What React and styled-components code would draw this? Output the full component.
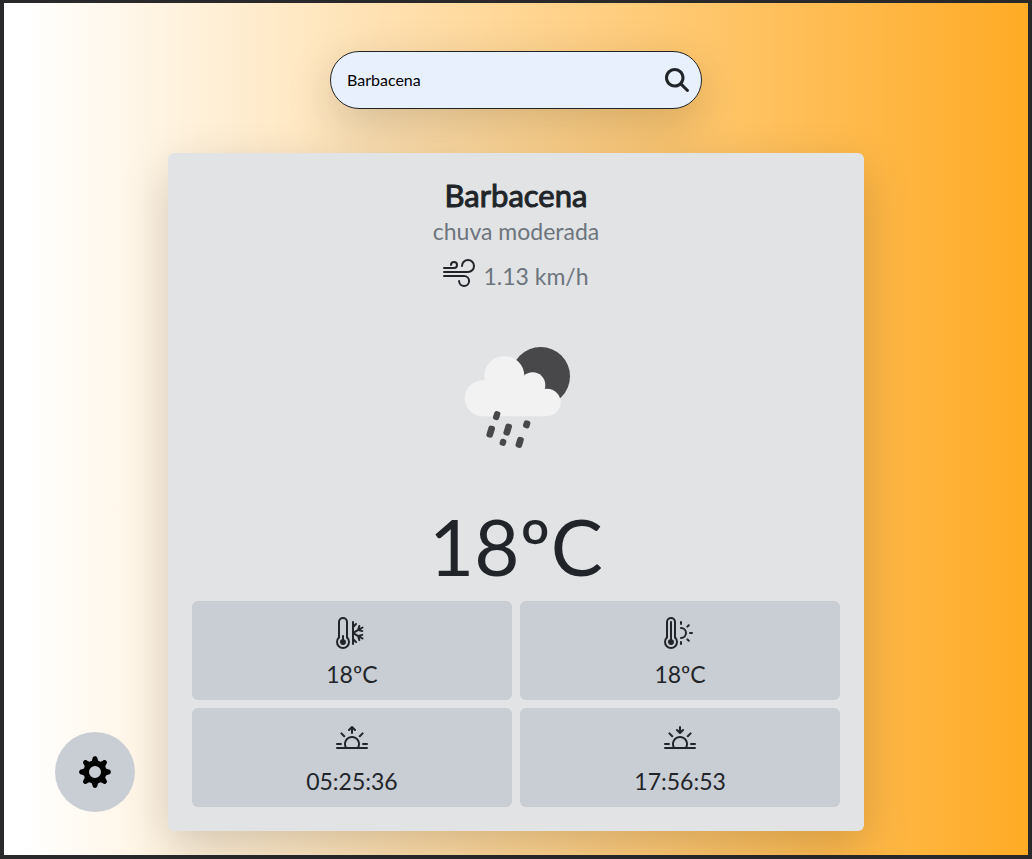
import React from "react";
import styled, { createGlobalStyle } from "styled-components";
import {
  BsWind,
  BsThermometerSnow,
  BsThermometerSun,
  BsSunrise,
  BsSunset,
} from "react-icons/bs";
import { FaMagnifyingGlass } from "react-icons/fa6";

const GlobalStyle = createGlobalStyle`
  *, *::before, *::after { box-sizing: border-box; }
  body {
    margin: 0;
    color: #212529;
    font-family: Lato, "Liberation Sans", sans-serif;
    font-size: 16px;
    line-height: 24px;
  }
  h1, p { margin: 0; }
`;

const Page = styled.div`
  min-height: 100vh;
  border: 4px solid #29282b;
  border-top-width: 3px;
  background: linear-gradient(90deg, #ffffff 2%, #ffab25 100%);
  padding: 48px 0 24px;
  display: flex;
  flex-direction: column;
  align-items: center;
  gap: 44px;
`;

const SearchForm = styled.form`
  width: 100%;
  max-width: 372px;
  height: 58px;
  display: flex;
  align-items: center;
  padding: 0 12px 0 16px;
  border: 1px solid #212529;
  border-radius: 29px;
  background: #e8f0fe;
  box-shadow: 0 16px 48px rgba(0, 0, 0, 0.176);
`;

const SearchInput = styled.input`
  flex: 1;
  min-width: 0;
  padding: 0;
  border: 0;
  outline: 0;
  background: transparent;
  color: #000;
  font: inherit;
`;

const SearchButton = styled.button`
  display: flex;
  padding: 0;
  border: 0;
  background: transparent;
  color: #212529;
  cursor: pointer;
`;

const Card = styled.main`
  width: 68%;
  min-width: 320px;
  padding: 24px;
  border-radius: 6px;
  background: #e2e3e5;
  box-shadow: 0 16px 48px rgba(0, 0, 0, 0.176);
  display: flex;
  flex-direction: column;
  align-items: center;
`;

const City = styled.h1`
  margin-bottom: 2px;
  font-size: 31px;
  line-height: 36px;
  font-weight: 400;
  -webkit-text-stroke: 1px currentColor;
`;

const Muted = styled.p`
  display: flex;
  align-items: flex-start;
  gap: 8px;
  color: #6c757d;
  font-size: 23px;
  line-height: 32px;
`;

const WindRow = styled(Muted)`
  height: 36px;
  margin-top: 10px;
  svg { color: #212529; }
  span { padding-top: 3px; }
`;

const WeatherArt = styled.svg`
  width: 150px;
  height: 130px;
  margin-top: 37px;
`;

const Temperature = styled.p`
  margin-top: 38px;
  font-size: 78px;
  line-height: 96px;
`;

const Tiles = styled.section`
  width: 100%;
  margin-top: 7px;
  display: grid;
  grid-template-columns: 1fr 1fr;
  gap: 8px;
`;

const Tile = styled.div`
  display: flex;
  flex-direction: column;
  align-items: center;
  gap: 7px;
  padding: 16px 8px 8px;
  border-radius: 6px;
  background: #c9cdd4;
  font-size: 23px;
  line-height: 36px;
`;

const SettingsButton = styled.button`
  position: fixed;
  left: 55px;
  bottom: 47px;
  width: 80px;
  height: 80px;
  display: flex;
  align-items: center;
  justify-content: center;
  padding: 0;
  border: 0;
  border-radius: 50%;
  background: #c9cdd4;
  color: #000;
  cursor: pointer;
`;

const readings = [
  { label: "Mínima", icon: BsThermometerSnow, value: "18ºC" },
  { label: "Máxima", icon: BsThermometerSun, value: "18ºC" },
  { label: "Nascer do sol", icon: BsSunrise, value: "05:25:36" },
  { label: "Pôr do sol", icon: BsSunset, value: "17:56:53" },
];

const drops = [
  [170, 257, 19, 27],
  [152, 305, 20, 36],
  [203, 299, 20, 36],
  [260, 283, 20, 23],
  [189, 337, 19, 21],
  [239, 337, 20, 33],
];

function RainCloud() {
  return (
    <WeatherArt viewBox="3 0 450 390" aria-hidden="true">
      <circle cx="302" cy="139" r="88" fill="#48484a" />
      <g fill="#f2f2f2">
        <circle cx="128" cy="205" r="54" />
        <circle cx="193" cy="138" r="60" />
        <circle cx="278" cy="165" r="38" />
        <circle cx="321" cy="217" r="41" />
        <path d="M128 259H321V190L278 140H193L128 170Z" />
      </g>
      <g fill="#48484a">
        {drops.map(([x, y, w, h]) => (
          <rect
            key={`${x}-${y}`}
            x={x - w / 2}
            y={y - h / 2}
            width={w}
            height={h}
            rx="8"
            transform={`rotate(17 ${x} ${y})`}
          />
        ))}
      </g>
    </WeatherArt>
  );
}

const toothAngles = [0, 45, 90, 135, 180, 225, 270, 315];

function Gear() {
  return (
    <svg width="32" height="32" viewBox="0 0 32 32" aria-hidden="true">
      <circle cx="16" cy="16" r="8.75" fill="none" stroke="currentColor" strokeWidth="5.5" />
      {toothAngles.map((angle) => (
        <path
          key={angle}
          d="M11.3 6.2C12.9 5.4 13.2 3.6 13.6 2C14.2-.5 17.8-.5 18.4 2C18.8 3.6 19.1 5.4 20.7 6.2L16 9Z"
          fill="currentColor"
          transform={`rotate(${angle} 16 16)`}
        />
      ))}
    </svg>
  );
}

export default function App() {
  return (
    <>
      <GlobalStyle />
      <Page>
        <SearchForm onSubmit={(event) => event.preventDefault()}>
          <SearchInput aria-label="Cidade" defaultValue="Barbacena" />
          <SearchButton type="submit" aria-label="Buscar">
            <FaMagnifyingGlass size={24} />
          </SearchButton>
        </SearchForm>
        <Card>
          <City>Barbacena</City>
          <Muted>chuva moderada</Muted>
          <WindRow>
            <BsWind size={32} />
            <span>1.13 km/h</span>
          </WindRow>
          <RainCloud />
          <Temperature>18ºC</Temperature>
          <Tiles>
            {readings.map(({ label, icon: Icon, value }) => (
              <Tile key={label}>
                <Icon size={32} aria-label={label} />
                <span>{value}</span>
              </Tile>
            ))}
          </Tiles>
        </Card>
        <SettingsButton type="button" aria-label="Configurações">
          <Gear />
        </SettingsButton>
      </Page>
    </>
  );
}
